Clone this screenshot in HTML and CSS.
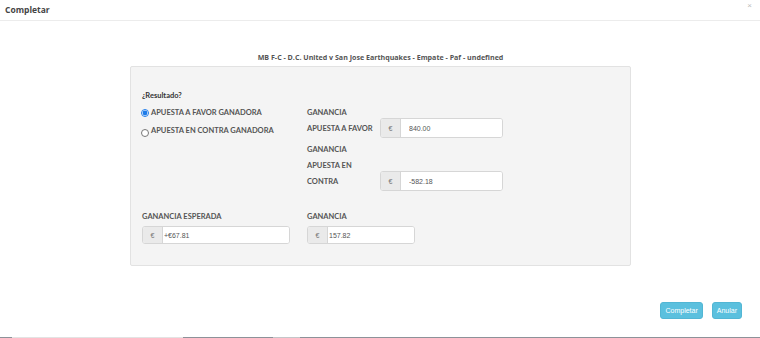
FILE: index.html
```html
<!DOCTYPE html>
<html lang="es">
<head>
  <meta charset="UTF-8">
  <meta name="viewport" content="width=device-width, initial-scale=1.0">
  <title>Completar</title>
  <link rel="stylesheet" href="styles.css">
</head>
<body>
  <div class="modal">
    <div class="modal-header">
      <h4 class="modal-title">Completar</h4>
      <span class="close">&times;</span>
    </div>

    <div class="modal-body">
      <h5 class="match">MB F-C - D.C. United v San Jose Earthquakes - Empate - Paf - undefined</h5>

      <div class="panel">
        <div class="res-title">¿Resultado?</div>

        <div class="row-top">
          <div class="radios">
            <label class="radio"><input type="radio" name="res" checked> APUESTA A FAVOR GANADORA</label>
            <label class="radio"><input type="radio" name="res"> APUESTA EN CONTRA GANADORA</label>
          </div>

          <div class="pairs">
            <div class="pair">
              <div class="pair-label">GANANCIA<br>APUESTA A FAVOR</div>
              <div class="input-group wide">
                <span class="addon">€</span>
                <input class="field" type="text" value="840.00">
              </div>
            </div>
            <div class="pair">
              <div class="pair-label">GANANCIA<br>APUESTA EN<br>CONTRA</div>
              <div class="input-group wide">
                <span class="addon">€</span>
                <input class="field" type="text" value="-582.18">
              </div>
            </div>
          </div>
        </div>

        <div class="row-bottom">
          <div class="group first">
            <div class="group-label">GANANCIA ESPERADA</div>
            <div class="input-group small expected">
              <span class="addon">€</span>
              <input class="field" type="text" value="+€67.81">
            </div>
          </div>
          <div class="group">
            <div class="group-label">GANANCIA</div>
            <div class="input-group small profit">
              <span class="addon">€</span>
              <input class="field" type="text" value="157.82">
            </div>
          </div>
        </div>
      </div>
    </div>

    <div class="modal-footer">
      <button class="btn">Completar</button>
      <button class="btn">Anular</button>
    </div>
  </div>

  <div class="taskbar">
    <span class="seg dark" style="width: 12px"></span>
    <span class="seg light" style="width: 171px"></span>
    <span class="seg dark" style="width: 90px"></span>
    <span class="seg mid" style="width: 27px"></span>
    <span class="seg dark fill"></span>
  </div>
</body>
</html>
```

FILE: styles.css
```css
/* Completar modal */
* {
  box-sizing: border-box;
}

body {
  margin: 0;
  width: 760px;
  height: 338px;
  overflow: hidden;
  background: #fff;
  font-family: 'Lato', 'Liberation Sans', sans-serif;
  color: #555;
  display: flex;
  flex-direction: column;
}

.modal {
  flex: 1;
  display: flex;
  flex-direction: column;
}

.modal-header {
  height: 21px;
  border-bottom: 1px solid #ececec;
  display: flex;
  align-items: center;
  justify-content: space-between;
  padding: 0 8px 2px 5px;
}

.modal-title {
  margin: 0;
  font-family: 'Open Sans', sans-serif;
  font-size: 8.5px;
  font-weight: 700;
  color: #444;
}

.close {
  font-family: 'Liberation Sans', sans-serif;
  font-size: 8px;
  color: #bbb;
  margin-top: -8px;
}

.modal-body {
  padding: 0 129px 0 130px;
}

.match {
  margin: 31px 0 4px;
  text-align: center;
  font-family: 'Open Sans', sans-serif;
  font-size: 7.1px;
  font-weight: 700;
  color: #555;
  line-height: 10px;
}

.panel {
  background: #f4f4f4;
  border: 1px solid #e2e2e2;
  border-radius: 2px;
  padding: 21px 11px 21px;
}

.res-title {
  font-size: 7.5px;
  font-weight: 700;
  color: #333;
  line-height: 16px;
}

.row-top {
  display: flex;
  margin-top: 1px;
}

.radios {
  width: 165px;
  display: flex;
  flex-direction: column;
  gap: 2px;
}

.radio {
  display: flex;
  align-items: center;
  font-size: 7.5px;
  font-weight: 700;
  line-height: 16px;
  color: #555;
}

.radio input {
  width: 8px;
  height: 8px;
  margin: 0 2px 0 -1px;
  accent-color: #1e7be8;
}

.radio:last-child input {
  margin-top: 3px;
}

.pairs {
  display: flex;
  flex-direction: column;
  gap: 4px;
}

.pair {
  display: flex;
  align-items: flex-end;
}

.pair-label {
  width: 73px;
  font-size: 7.5px;
  font-weight: 700;
  line-height: 16px;
  margin-bottom: 1px;
}

.input-group {
  display: flex;
  background: #fff;
  border: 1px solid #d6d6d6;
  border-radius: 3px;
  overflow: hidden;
}

.input-group.wide {
  width: 123px;
  height: 20px;
}

.input-group.small {
  height: 18px;
}

.expected {
  width: 148px;
}

.profit {
  width: 108px;
}

.addon {
  width: 20px;
  background: #eaeaea;
  border-right: 1px solid #d6d6d6;
  display: flex;
  align-items: center;
  justify-content: center;
  font-family: 'Liberation Sans', sans-serif;
  font-size: 7px;
  color: #777;
}

.field {
  flex: 1;
  min-width: 0;
  border: none;
  outline: none;
  background: #fff;
  font-family: 'Liberation Sans', sans-serif;
  font-size: 7px;
  color: #555;
  padding: 0 0 0 8px;
}

.small .field {
  padding-left: 1px;
}

.row-bottom {
  display: flex;
  margin-top: 18px;
}

.group.first {
  width: 165px;
}

.group-label {
  font-size: 7.5px;
  font-weight: 700;
  line-height: 16px;
  margin-bottom: 1px;
}

.modal-footer {
  margin-top: auto;
  display: flex;
  justify-content: flex-end;
  gap: 9px;
  padding: 0 18px 18px 0;
}

.btn {
  height: 17px;
  padding: 0 4px;
  background: #5bc0de;
  border: 1px solid #52b6d4;
  border-radius: 3px;
  color: #fff;
  font-family: 'Liberation Sans', sans-serif;
  font-size: 7px;
}

.taskbar {
  display: flex;
  height: 1px;
}

.seg.dark {
  background: #8d9299;
}

.seg.light {
  background: #e3e3e3;
}

.seg.mid {
  background: #c4c6c9;
}

.seg.fill {
  flex: 1;
}
```
